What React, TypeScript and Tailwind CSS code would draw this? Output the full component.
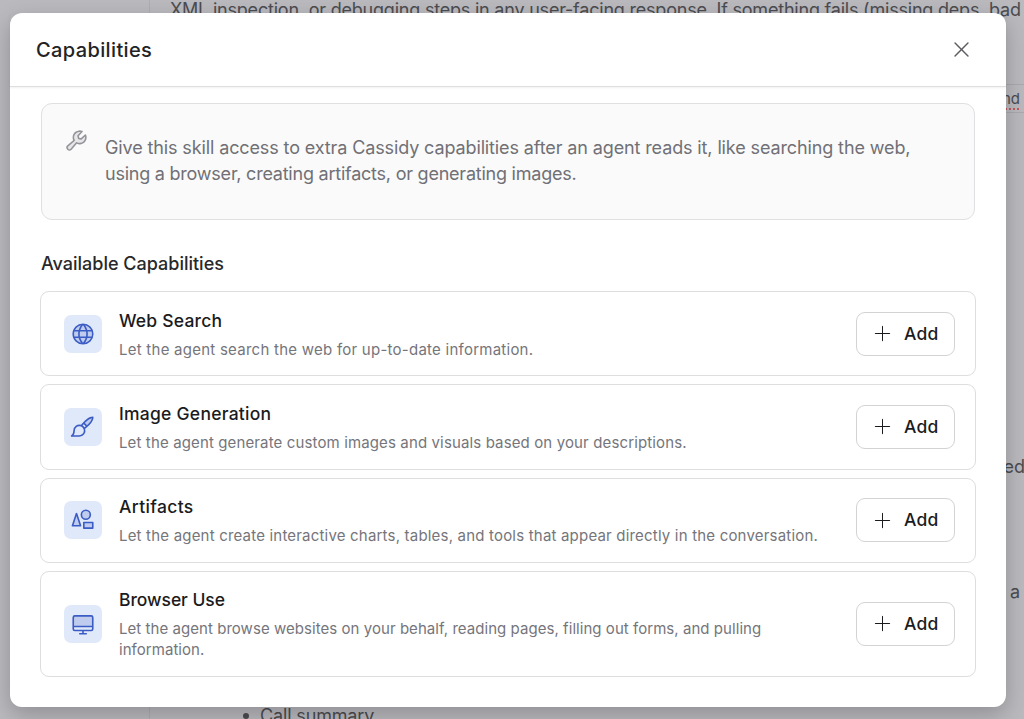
import type { ComponentType } from 'react';
import {
  PiDesktopDuotone,
  PiGlobeDuotone,
  PiPaintBrushDuotone,
  PiPlusLight,
  PiShapesDuotone,
  PiWrenchDuotone,
  PiX,
} from 'react-icons/pi';

interface Capability {
  title: string;
  description: string;
  icon: ComponentType<{ className?: string }>;
  titleClass: string;
  descriptionClass: string;
  tall?: boolean;
}

const capabilities: Capability[] = [
  {
    title: 'Web Search',
    description: 'Let the agent search the web for up-to-date information.',
    icon: PiGlobeDuotone,
    titleClass: 'tracking-[0.2px]',
    descriptionClass: 'tracking-[0.25px]',
  },
  {
    title: 'Image Generation',
    description: 'Let the agent generate custom images and visuals based on your descriptions.',
    icon: PiPaintBrushDuotone,
    titleClass: 'tracking-[0.25px]',
    descriptionClass: 'tracking-[0.13px]',
  },
  {
    title: 'Artifacts',
    description: 'Let the agent create interactive charts, tables, and tools that appear directly in the conversation.',
    icon: PiShapesDuotone,
    titleClass: 'tracking-[0.35px]',
    descriptionClass: 'tracking-[0.193px]',
  },
  {
    title: 'Browser Use',
    description: 'Let the agent browse websites on your behalf, reading pages, filling out forms, and pulling information.',
    icon: PiDesktopDuotone,
    titleClass: 'tracking-[-0.05px]',
    descriptionClass: 'tracking-[0.05px]',
    tall: true,
  },
];

function CapabilityCard({ title, description, icon: Icon, titleClass, descriptionClass, tall }: Capability) {
  return (
    <div className={`flex items-center rounded-[9px] border border-[#dededf] pl-[23px] pr-5 ${tall ? 'h-[106px]' : 'h-[85.3px]'}`}>
      <div className="flex size-[38px] shrink-0 items-center justify-center rounded-[7px] bg-[#e0e9f9] text-[#3b5cc4]">
        <Icon className="size-[26px]" />
      </div>
      <div className="ml-[17px] w-[715px] shrink-0">
        <h3 className={`text-[17.5px] leading-[25px] font-medium text-[#1b1b1d] ${titleClass}`}>{title}</h3>
        <p className={`mt-[6px] max-w-[702px] text-[15px] leading-[21px] text-[#75757b] ${descriptionClass}`}>{description}</p>
      </div>
      <button className="ml-auto flex h-[44px] w-[99.5px] shrink-0 items-center rounded-[9px] border border-[#d3d3d5] pl-[15.5px] text-[#1b1b1d]">
        <PiPlusLight className="size-[21px]" />
        <span className="ml-[11px] text-[17.5px] font-medium tracking-[0.2px]">Add</span>
      </button>
    </div>
  );
}

// Page content that stays partly visible behind the dialog
function PageBehind() {
  return (
    <div className="absolute inset-0 overflow-hidden bg-[#b9b9be] text-[18px] leading-[26px] whitespace-nowrap text-[#4c4c50]">
      <div className="absolute inset-y-0 left-[149px] w-px bg-[#adadb2]" />
      <p className="absolute top-[-3px] left-[170px] tracking-[-0.21px]">
        XML inspection, or debugging steps in any user-facing response. If something fails (missing deps, bad
      </p>
      <div className="absolute top-[84px] right-0 h-[29px] w-[60px] border-y border-[#a9a9ae]" />
      <span className="absolute top-[86px] right-[4px] text-[15px] underline decoration-[#c0595f] decoration-dotted decoration-[1.5px] underline-offset-4">
        cmd
      </span>
      <span className="absolute top-[454px] right-[-1px]">needed</span>
      <span className="absolute top-[579px] right-[4px]">a</span>
      <p className="absolute top-[703px] left-[243px] flex items-center tracking-[-0.15px]">
        <span className="mr-[11px] size-[6px] rounded-full bg-[#4c4c50]" />
        Call summary
      </p>
    </div>
  );
}

export default function App() {
  return (
    <main className="relative h-[719px] w-[1024px] overflow-hidden font-['Inter',sans-serif]">
      <PageBehind />
      <section
        role="dialog"
        className="absolute top-[13px] left-[10px] flex h-[694px] w-[996px] flex-col rounded-[12px] bg-white shadow-[0_8px_22px_rgba(0,0,0,0.22)]"
      >
        <header className="flex h-[74px] shrink-0 items-center justify-between border-b border-[#dedee0] pr-[33px] pl-[26px] shadow-[0_1px_2px_rgba(0,0,0,0.06)]">
          <h1 className="text-[20px] font-medium tracking-[0.37px] text-[#232325]">Capabilities</h1>
          <button aria-label="Close" className="text-[#5c5c60]">
            <PiX className="size-[23px]" />
          </button>
        </header>

        <div className="flex flex-col px-[30px] pt-[16px]">
          <div className="mx-[1px] flex h-[117px] rounded-[11px] border border-[#e0e0e2] bg-[#fafafa] pt-[31px] pl-[22px] text-[#707076]">
            <PiWrenchDuotone className="mt-[-7px] size-[25px] shrink-0 text-[#94949b]" />
            <p className="ml-[16px] text-[18px] leading-[26px]">
              <span className="block tracking-[-0.12px]">
                Give this skill access to extra Cassidy capabilities after an agent reads it, like searching the web,
              </span>
              <span className="block tracking-[-0.23px]">using a browser, creating artifacts, or generating images.</span>
            </p>
          </div>

          <h2 className="mt-[31px] ml-[1px] text-[18px] leading-[26px] font-medium text-[#28282a]">Available Capabilities</h2>

          <div className="mt-[14px] flex flex-col gap-2">
            {capabilities.map((capability) => (
              <CapabilityCard key={capability.title} {...capability} />
            ))}
          </div>
        </div>
      </section>
    </main>
  );
}
